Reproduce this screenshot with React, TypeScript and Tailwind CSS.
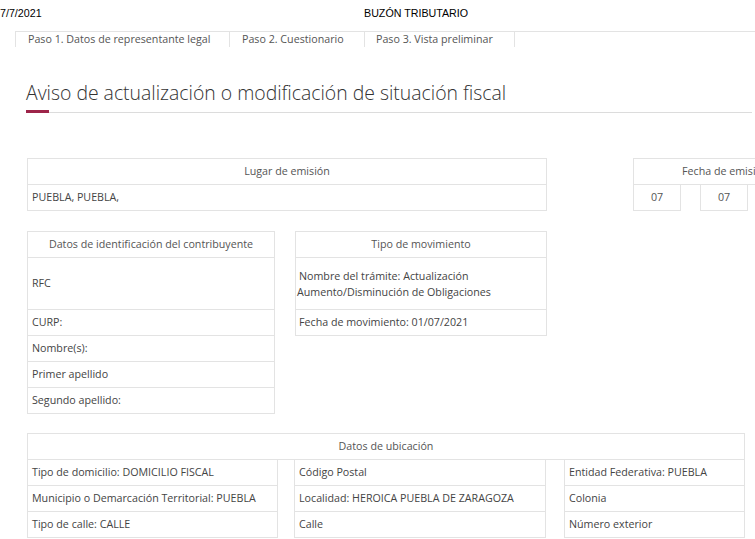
import React from 'react';

const cell = 'flex h-[27px] items-center border border-[#e3e3e3] px-1 text-[10.7px] text-[#444]';
const head = 'flex h-[27px] items-center justify-center border border-[#e3e3e3] text-[10.7px] text-[#555]';

function Row({ text, className = '' }: { text: string; className?: string }) {
  return <div className={`${cell} -mt-px ${className}`}>{text}</div>;
}

export default function App() {
  return (
    <div className="h-[539px] w-[755px] overflow-hidden bg-white font-['Open_Sans',sans-serif]">
      <div className="relative h-[24px] font-['Liberation_Sans',Arial,sans-serif] text-[10.7px] text-black">
        <span className="absolute left-0 top-[5px]">7/7/2021</span>
        <span className="absolute left-[364px] top-[5px]">BUZÓN TRIBUTARIO</span>
      </div>

      <div className="ml-[15px] mt-[7px] flex h-[16px] border-t border-[#e3e3e3] text-[10.7px] text-[#555]">
        <div className="w-[215px] border-x border-[#e3e3e3] pl-3 leading-[15px]">Paso 1. Datos de representante legal</div>
        <div className="w-[135px] border-r border-[#e3e3e3] pl-3 leading-[15px]">Paso 2. Cuestionario</div>
        <div className="w-[150px] border-r border-[#e3e3e3] pl-[11px] leading-[15px]">Paso 3. Vista preliminar</div>
      </div>

      <div className="ml-[26px] mt-[34px]">
        <h1 className="whitespace-nowrap text-[19.4px] font-light leading-[24px] text-[#333]">Aviso de actualización o modificación de situación fiscal</h1>
        <div className="mt-[5px] flex items-end">
          <div className="h-[3px] w-[23px] bg-[#9d2449]" />
          <div className="h-px w-[703px] bg-[#dcdcdc]" />
        </div>
      </div>

      <div className="ml-[27px] mt-[45px] flex w-max items-start">
        <div className="w-[520px] shrink-0">
          <div className={head}>Lugar de emisión</div>
          <Row text="PUEBLA, PUEBLA," />
        </div>
        <div className="ml-[86px] w-[200px] shrink-0">
          <div className={`${head} justify-start whitespace-nowrap pl-[48px]`}>Fecha de emisión</div>
          <div className="-mt-px flex">
            <div className={`${head} w-[48px] shrink-0`}>07</div>
            <div className="h-[27px] w-[19px] shrink-0 border-t border-[#e3e3e3]" />
            <div className={`${head} w-[48px] shrink-0`}>07</div>
            <div className="h-[27px] w-[19px] shrink-0 border-t border-[#e3e3e3]" />
            <div className={`${head} w-[66px] shrink-0`}>2021</div>
          </div>
        </div>
      </div>

      <div className="ml-[27px] mt-[20px] flex items-start gap-[20px]">
        <div className="w-[248px] shrink-0">
          <div className={head}>Datos de identificación del contribuyente</div>
          <Row text="RFC" className="h-[53px]" />
          <Row text="CURP:" />
          <Row text="Nombre(s):" />
          <Row text="Primer apellido" />
          <Row text="Segundo apellido:" />
        </div>
        <div className="w-[252px] shrink-0">
          <div className={head}>Tipo de movimiento</div>
          <div className={`${cell} -mt-px h-[53px] px-[1px] leading-[16px]`}>
            <span>
              <span className="pl-[2px]">Nombre del trámite: Actualización</span>
              <br />
              Aumento/Disminución de Obligaciones
            </span>
          </div>
          <Row text="Fecha de movimiento: 01/07/2021" className="pl-[3px]" />
        </div>
      </div>

      <div className="ml-[27px] mt-[19px] w-[718px]">
        <div className={head}>Datos de ubicación</div>
        <div className="-mt-px flex">
          <div className="w-[251px] shrink-0">
            <div className={cell}>Tipo de domicilio: DOMICILIO FISCAL</div>
            <Row text="Municipio o Demarcación Territorial: PUEBLA" />
            <Row text="Tipo de calle: CALLE" />
          </div>
          <div className="ml-[16px] w-[252px] shrink-0">
            <div className={cell}>Código Postal</div>
            <Row text="Localidad: HEROICA PUEBLA DE ZARAGOZA" />
            <Row text="Calle" />
          </div>
          <div className="ml-[18px] w-[181px] shrink-0">
            <div className={cell}>Entidad Federativa: PUEBLA</div>
            <Row text="Colonia" />
            <Row text="Número exterior" />
          </div>
        </div>
      </div>
    </div>
  );
}
